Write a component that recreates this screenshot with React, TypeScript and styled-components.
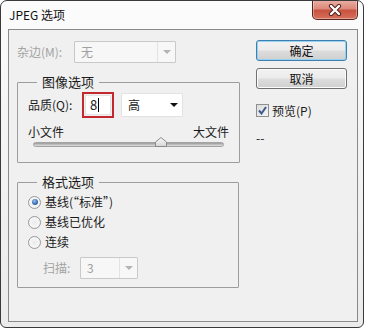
import styled, { createGlobalStyle } from "styled-components"

const GlobalStyle = createGlobalStyle`
  html, body { margin: 0; padding: 0; background: #ffffff; }
  body {
    font-family: "Noto Sans CJK SC", "Noto Sans", sans-serif;
    font-size: 12px;
    line-height: 16px;
    color: #1b1b1b;
  }
`

const Window = styled.div`
  box-sizing: border-box;
  width: 364px;
  height: 328px;
  border: 1px solid #3a3a3a;
  border-radius: 7px 7px 6px 6px;
  background: linear-gradient(180deg, #fcfcfc 0%, #f3f3f3 45%, #ebebeb 100%);
  display: flex;
  flex-direction: column;
  padding: 0 5px 5px 7px;
  overflow: hidden;
`

const TitleBar = styled.div`
  height: 28px;
  display: flex;
  justify-content: space-between;
  align-items: flex-start;
`

const Title = styled.div`
  font-size: 12px;
  line-height: 28px;
  color: #111;
  padding-left: 1px;
`

const CloseButton = styled.div`
  box-sizing: border-box;
  width: 46px;
  height: 20px;
  margin-top: -1px;
  border: 1px solid #5b2420;
  border-top: none;
  border-radius: 0 0 5px 5px;
  background: linear-gradient(180deg, #eab1a5 0%, #dc8a7c 45%, #c8523f 55%, #d6705c 100%);
  box-shadow: inset 0 0 0 1px rgba(255, 255, 255, 0.35);
  display: flex;
  align-items: center;
  justify-content: center;
`

const Client = styled.div`
  flex: 1;
  border: 1px solid #8a8a8a;
  background: #f0f0f0;
  display: flex;
  padding: 10px 10px 0 8px;
`

const LeftColumn = styled.div`
  width: 223px;
  display: flex;
  flex-direction: column;
`

const RightColumn = styled.div`
  margin-left: auto;
  width: 91px;
  display: flex;
  flex-direction: column;
`

const FieldRow = styled.div<{ $top?: number; $indent?: number }>`
  display: flex;
  align-items: center;
  margin-top: ${p => p.$top ?? 0}px;
  padding-left: ${p => p.$indent ?? 0}px;
`

const Label = styled.span<{ $w: number; $disabled?: boolean }>`
  width: ${p => p.$w}px;
  flex-shrink: 0;
  color: ${p => (p.$disabled ? "#a3a3a3" : "#1b1b1b")};
  white-space: nowrap;
`

const Select = styled.div<{ $w: number; $h: number; $disabled?: boolean }>`
  box-sizing: border-box;
  width: ${p => p.$w}px;
  height: ${p => p.$h}px;
  display: flex;
  align-items: center;
  border: 1px solid ${p => (p.$disabled ? "#c9c9c9" : "#e2e2e2")};
  background: ${p => (p.$disabled ? "#f7f7f7" : "#ffffff")};
  color: ${p => (p.$disabled ? "#a0a0a0" : "#1b1b1b")};
  border-radius: 1px;
`

const SelectText = styled.span`
  flex: 1;
  padding-left: 6px;
`

const SelectArrow = styled.span<{ $disabled?: boolean }>`
  width: 17px;
  align-self: stretch;
  display: flex;
  align-items: center;
  justify-content: center;
  border-left: 1px solid ${p => (p.$disabled ? "#e3e3e3" : "transparent")};
  &::after {
    content: "";
    border-left: 4px solid transparent;
    border-right: 4px solid transparent;
    border-top: 4px solid ${p => (p.$disabled ? "#b4b4b4" : "#111")};
  }
`

const Group = styled.div<{ $top: number; $w: number; $h: number }>`
  position: relative;
  box-sizing: border-box;
  margin-top: ${p => p.$top}px;
  width: ${p => p.$w}px;
  height: ${p => p.$h}px;
  border: 1px solid #9d9d9d;
  border-radius: 1px;
  padding: 9px 10px 0 10px;
  display: flex;
  flex-direction: column;
`

const Legend = styled.span`
  position: absolute;
  top: -9px;
  left: 19px;
  padding: 0 5px;
  background: #f0f0f0;
  font-size: 13px;
  line-height: 16px;
  color: #1b1b1b;
`

const QualityBox = styled.div`
  box-sizing: border-box;
  width: 32px;
  height: 26px;
  border: 2px solid #c3282f;
  padding: 1px;
  margin-right: 7px;
`

const QualityInput = styled.div`
  box-sizing: border-box;
  height: 100%;
  background: #fff;
  border: 1px solid #e4e4e4;
  padding-left: 4px;
  display: flex;
  align-items: center;
  font-size: 13px;
`

const Caret = styled.span`
  display: inline-block;
  width: 1px;
  height: 14px;
  background: #000;
  margin-left: 1px;
`

const SizeLabels = styled.div`
  display: flex;
  justify-content: space-between;
  margin-top: 6px;
`

const SliderTrack = styled.div`
  position: relative;
  box-sizing: border-box;
  margin: 2px 5px 0 5px;
  height: 5px;
  border-radius: 3px;
  border: 1px solid #a3a3a3;
  background: linear-gradient(180deg, #9b9b9b 0%, #c4c4c4 60%, #e2e2e2 100%);
`

const SliderThumb = styled.svg`
  position: absolute;
  left: 121px;
  top: -6px;
`

const RadioRow = styled.label`
  display: flex;
  align-items: center;
  height: 20px;
  gap: 4px;
`

const RadioCircle = styled.span<{ $checked?: boolean }>`
  box-sizing: border-box;
  width: 13px;
  height: 13px;
  border-radius: 50%;
  border: 1px solid #9a9a9a;
  background: radial-gradient(circle at 50% 50%, #e9e9e9 0%, #f7f7f7 60%, #dcdcdc 100%);
  display: flex;
  align-items: center;
  justify-content: center;
  &::after {
    content: "";
    display: ${p => (p.$checked ? "block" : "none")};
    width: 6px;
    height: 6px;
    border-radius: 50%;
    background: radial-gradient(circle at 40% 35%, #9ec3ec 0%, #3a6fb4 55%, #1d4b8c 100%);
  }
`

const Button = styled.div<{ $default?: boolean }>`
  box-sizing: border-box;
  height: 21px;
  display: flex;
  align-items: center;
  justify-content: center;
  border-radius: 3px;
  border: 1px solid ${p => (p.$default ? "#3c7fb1" : "#707070")};
  background: linear-gradient(180deg, #f2f2f2 0%, #ebebeb 48%, #dddddd 52%, #cfcfcf 100%);
  box-shadow: ${p => (p.$default ? "inset 0 0 0 1px #98d1ef" : "inset 0 0 0 1px #fcfcfc")};
  color: #111;
  & + & {
    margin-top: 7px;
  }
`

const CheckRow = styled.label`
  display: flex;
  align-items: center;
  gap: 3px;
  margin-top: 15px;
  height: 13px;
`

const CheckBox = styled.span`
  box-sizing: border-box;
  width: 13px;
  height: 13px;
  border: 1px solid #8e8f8f;
  background: linear-gradient(135deg, #dcdcdc 0%, #f4f4f4 100%);
  display: flex;
  align-items: center;
  justify-content: center;
`

const Dashes = styled.div`
  margin-top: 13px;
  padding-left: 0;
  color: #1b1b1b;
`

export default function App() {
  return (
    <>
      <GlobalStyle />
      <Window>
        <TitleBar>
          <Title>JPEG 选项</Title>
          <CloseButton>
            <svg width="14" height="12" viewBox="0 0 14 12">
              <path d="M3 2 L11 10 M11 2 L3 10" stroke="#4a1d19" strokeWidth="4.2" strokeLinecap="round" />
              <path d="M3 2 L11 10 M11 2 L3 10" stroke="#ffffff" strokeWidth="2.4" strokeLinecap="round" />
            </svg>
          </CloseButton>
        </TitleBar>
        <Client>
          <LeftColumn>
            <FieldRow $top={1}>
              <Label $w={57} $disabled>杂边(M):</Label>
              <Select $w={102} $h={22} $disabled>
                <SelectText>无</SelectText>
                <SelectArrow $disabled />
              </Select>
            </FieldRow>

            <Group $top={19} $w={223} $h={81}>
              <Legend>图像选项</Legend>
              <FieldRow>
                <Label $w={54}>品质(Q):</Label>
                <QualityBox>
                  <QualityInput>8<Caret /></QualityInput>
                </QualityBox>
                <Select $w={62} $h={24}>
                  <SelectText>高</SelectText>
                  <SelectArrow />
                </Select>
              </FieldRow>
              <SizeLabels>
                <span>小文件</span>
                <span>大文件</span>
              </SizeLabels>
              <SliderTrack>
                <SliderThumb width="12" height="10" viewBox="0 0 12 10">
                  <defs>
                    <linearGradient id="thumb" x1="0" y1="0" x2="0" y2="1">
                      <stop offset="0" stopColor="#fbfbfb" />
                      <stop offset="1" stopColor="#d6d6d6" />
                    </linearGradient>
                  </defs>
                  <path d="M0.5 9.5 L0.5 5 L6 0.5 L11.5 5 L11.5 9.5 Z" fill="url(#thumb)" stroke="#8a8a8a" />
                </SliderThumb>
              </SliderTrack>
            </Group>

            <Group $top={19} $w={222} $h={106}>
              <Legend>格式选项</Legend>
              <RadioRow>
                <RadioCircle $checked />
                <span>基线(“标准”)</span>
              </RadioRow>
              <RadioRow>
                <RadioCircle />
                <span>基线已优化</span>
              </RadioRow>
              <RadioRow>
                <RadioCircle />
                <span>连续</span>
              </RadioRow>
              <FieldRow $top={5} $indent={15}>
                <Label $w={37} $disabled>扫描:</Label>
                <Select $w={58} $h={22} $disabled>
                  <SelectText>3</SelectText>
                  <SelectArrow $disabled />
                </Select>
              </FieldRow>
            </Group>
          </LeftColumn>

          <RightColumn>
            <Button $default>确定</Button>
            <Button>取消</Button>
            <CheckRow>
              <CheckBox>
                <svg width="9" height="9" viewBox="0 0 9 9">
                  <path d="M1 4.5 L3.5 7.5 L8 1" stroke="#3e5a8f" strokeWidth="2" fill="none" />
                </svg>
              </CheckBox>
              <span>预览(P)</span>
            </CheckRow>
            <Dashes>--</Dashes>
          </RightColumn>
        </Client>
      </Window>
    </>
  )
}
